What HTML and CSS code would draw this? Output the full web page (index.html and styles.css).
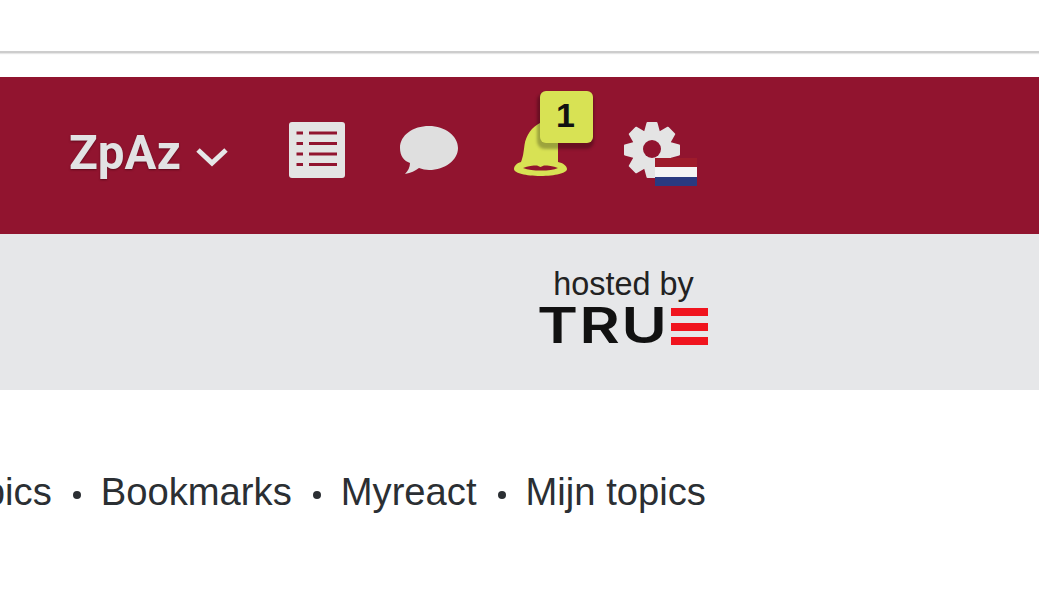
FILE: index.html
```html
<!DOCTYPE html>
<html lang="nl">
<head>
<meta charset="utf-8">
<title>ZpAz</title>
<link rel="stylesheet" href="styles.css">
</head>
<body>
<div class="top"></div>
<header class="bar">
  <div class="user"><span class="user-name">ZpAz</span>
    <svg class="chev" width="34" height="20" viewBox="0 0 34 20"><path d="M3 3l14 13L31 3" fill="none" stroke="#e6e7e8" stroke-width="5"/></svg>
  </div>
  <svg class="ico-list" width="58" height="58" viewBox="0 0 58 58">
    <rect x="1" y="1" width="56" height="56" rx="3" fill="#e4e4e4"/>
    <g fill="#91142f">
      <rect x="8.500" y="10.500" width="6.500" height="3"/><rect x="21" y="10.500" width="28" height="3"/>
      <rect x="8.500" y="21" width="6.500" height="3"/><rect x="21" y="21" width="28" height="3"/>
      <rect x="8.500" y="31.500" width="6.500" height="3"/><rect x="21" y="31.500" width="28" height="3"/>
      <rect x="8.500" y="42" width="6.500" height="3"/><rect x="21" y="42" width="28" height="3"/>
    </g>
  </svg>
  <svg class="ico-chat" width="60" height="52" viewBox="0 0 60 52"><path d="M30 1C14 1 1 10 1 23c0 8 4 13 10 15 0 4-2 8-5 11 6-1 10-3 14-6 3 1 7 2 10 2 16 0 29-10 29-22S46 1 30 1z" fill="#dfdfdf"/></svg>
  <div class="bell-wrap">
    <svg class="ico-bell" width="54" height="54" viewBox="0 0 54 54">
      <path d="M26 -2C18 2 12 10 10.500 20 9.500 28 9 32 7 37 3 38 0 41 0 44c0 4 12 7 26.500 7S53 48 53 44c0-3-4-6-9-7V-2z" fill="#d8e254"/>
      <path d="M9 43c5-2 10-2.500 14-2.500l3.500 1.500 3.500-1.500c4 0 9 .5 14 2.500-4 2-10 2.500-17 2.500s-13-.5-18-2.500z" fill="#91142f"/>
    </svg>
    <span class="badge">1</span>
  </div>
  <div class="gear-wrap">
    <svg width="58" height="58" viewBox="0 0 58 58">
      <circle cx="29" cy="29" r="20" fill="#e4e4e4"/>
      <g fill="#e4e4e4" stroke="#e4e4e4" stroke-width="2" stroke-linejoin="round">
        <path d="M24.500 2h9l3 11h-15z"/>
        <path d="M24.500 2h9l3 11h-15z" transform="rotate(45 29 29)"/>
        <path d="M24.500 2h9l3 11h-15z" transform="rotate(90 29 29)"/>
        <path d="M24.500 2h9l3 11h-15z" transform="rotate(135 29 29)"/>
        <path d="M24.500 2h9l3 11h-15z" transform="rotate(180 29 29)"/>
        <path d="M24.500 2h9l3 11h-15z" transform="rotate(225 29 29)"/>
        <path d="M24.500 2h9l3 11h-15z" transform="rotate(270 29 29)"/>
        <path d="M24.500 2h9l3 11h-15z" transform="rotate(315 29 29)"/>
      </g>
      <circle cx="29" cy="28" r="9" fill="#91142f"/>
    </svg>
    <span class="flag"><i class="fl-r"></i><i class="fl-w"></i><i class="fl-b"></i></span>
  </div>
</header>
<section class="sub">
  <div class="host">
    <div class="host-label">hosted by</div>
    <div class="logo"><span class="logo-text">TRU</span>
      <span class="logo-e"><i></i><i></i><i></i></span>
    </div>
  </div>
</section>
<nav class="links">
  <a>Topics</a><i class="dot"></i><a>Bookmarks</a><i class="dot"></i><a>Myreact</a><i class="dot"></i><a>Mijn topics</a>
</nav>
</body>
</html>
```
FILE: styles.css
```css
html, body { margin: 0; padding: 0; }
body { width: 1039px; height: 596px; overflow: hidden; background: #fff; font-family: "Liberation Sans", Arial, sans-serif; }

.top { height: 51px; border-bottom: 2px solid #cdcdcd; box-shadow: 0 1px 1px #e6e6e6; margin-bottom: 24px; }

.bar { height: 157px; background: #91142f; display: flex; align-items: flex-start; padding-left: 69px; box-sizing: border-box; }

.user { display: flex; align-items: center; margin-top: 44px; height: 64px; }
.user-name { font-family: Roboto, sans-serif; font-weight: 700; font-size: 49px; line-height: 64px; color: #e2e3e4; width: 111px; white-space: nowrap; text-shadow: 0 1px 2px rgba(60,0,15,.6); transform: scaleX(.97); transform-origin: left center; }
.chev { margin: 8px 0 0 15px; }

.ico-list { margin: 44px 0 0 59px; flex: none; }
.ico-chat { margin: 48px 0 0 53px; flex: none; }

.bell-wrap { position: relative; width: 54px; height: 54px; margin: 48px 0 0 55px; flex: none; }
.ico-bell { display: block; overflow: visible; }
.badge { position: absolute; left: 26px; top: -34px; width: 51px; height: 52px; padding-right: 2px; border-radius: 6px; background: #d8e254; color: #111; font-weight: 700; font-size: 34px; line-height: 48px; text-align: center; box-shadow: -1px 4px 3px 2px rgba(0,0,0,.28); }

.gear-wrap { position: relative; width: 58px; height: 58px; margin: 44px 0 0 55px; flex: none; }
.gear-wrap svg { display: block; }
.flag { position: absolute; left: 32px; top: 37px; width: 42px; height: 28px; display: flex; flex-direction: column; }
.flag i { flex: 1; display: block; }
.fl-r { background: #9e1b2b; }
.fl-w { background: #f4f4f4; }
.fl-b { background: #2a3a80; }

.sub { height: 156px; background: #e6e7e9; display: flex; padding-left: 540px; }
.host { width: 169px; padding-top: 35px; }
.host-label { font-size: 32.400px; line-height: 30px; color: #222; text-align: center; width: 167px; }
.logo { display: flex; align-items: flex-start; height: 38px; margin-top: 8px; }
.logo-text { font-family: Inter, sans-serif; font-weight: 600; font-size: 49px; line-height: 38px; color: #111; letter-spacing: 1px; transform: scaleX(1.27); transform-origin: left center; width: 129px; white-space: nowrap; margin-left: -3px; margin-right: 3px; }
.logo-e { display: flex; flex-direction: column; justify-content: space-between; width: 37px; height: 37px; margin: 1px 0 0 2px; }
.logo-e i { display: block; height: 8px; background: #f0141e; }

.links { display: flex; align-items: center; margin: 79px 0 0 -56.500px; font-size: 38.200px; line-height: 46px; color: #2b2f33; white-space: nowrap; }
.dot { width: 8px; height: 8px; border-radius: 50%; background: #2b2f33; margin: 6px 20px 0 21px; flex: none; }
```
